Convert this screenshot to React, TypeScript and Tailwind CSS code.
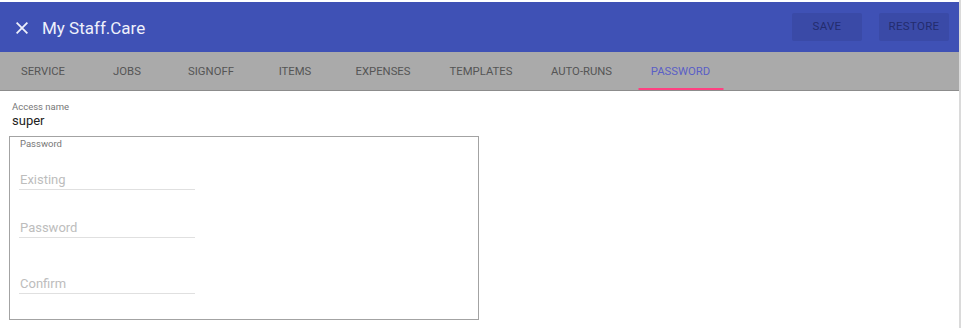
import { useState } from "react";

const tabs: { label: string; width: string }[] = [
  { label: "SERVICE", width: "w-[84px]" },
  { label: "JOBS", width: "w-[84px]" },
  { label: "SIGNOFF", width: "w-[84px]" },
  { label: "ITEMS", width: "w-[84px]" },
  { label: "EXPENSES", width: "w-[92px]" },
  { label: "TEMPLATES", width: "w-[104px]" },
  { label: "AUTO-RUNS", width: "w-[97px]" },
  { label: "PASSWORD", width: "w-[101px]" },
];

function CloseIcon() {
  return (
    <svg width="12" height="12" viewBox="0 0 12 12" fill="none" stroke="currentColor" strokeWidth="1.8">
      <path d="M0.6 0.6 L11.4 11.4 M11.4 0.6 L0.6 11.4" />
    </svg>
  );
}

function UnderlineInput({ placeholder, className }: { placeholder: string; className: string }) {
  return (
    <input
      type="password"
      placeholder={placeholder}
      className={`block w-[176px] h-[20px] border-b border-[#e0e0e0] bg-transparent px-[1px] text-[13px] text-[#333] outline-none placeholder:text-[#bdbdbd] ${className}`}
    />
  );
}

export default function App() {
  const [active, setActive] = useState("PASSWORD");

  return (
    <div className="w-[961px] h-[328px] overflow-hidden bg-white pt-[2px] border-r-2 border-[#dadada] font-['Roboto',sans-serif]">
      {/* barre du haut */}
      <header className="h-[50px] bg-[#3f51b5] flex items-center pl-[16px] pr-[10px]">
        <span className="text-[#eef0fb] flex mt-[1px]">
          <CloseIcon />
        </span>
        <h1 className="ml-[14px] mt-[2px] text-[17px] font-normal text-[#eef0fb] leading-none">My Staff.Care</h1>
        <div className="ml-auto flex gap-[17px]">
          <button className="w-[70px] h-[28px] rounded-[2px] bg-[#3a4aa7] text-[11.5px] text-[#232c6e] tracking-[0.3px]">
            SAVE
          </button>
          <button className="w-[70px] h-[28px] rounded-[2px] bg-[#3a4aa7] text-[11.5px] text-[#232c6e] tracking-[0.3px]">
            RESTORE
          </button>
        </div>
      </header>

      {/* onglets */}
      <nav className="h-[39px] bg-[#aaaaaa] border-b border-[#8c8c8c] flex pl-[1px]">
        {tabs.map((t) => (
          <button
            key={t.label}
            onClick={() => setActive(t.label)}
            className={`relative ${t.width} h-full flex items-center justify-center text-[11.3px] pt-[3px] ${
              active === t.label ? "text-[#5a5fc6]" : "text-[#555555]"
            }`}
          >
            {t.label}
            {active === t.label && (
              <span className="absolute bottom-0 left-1/2 -translate-x-1/2 w-[85px] h-[2px] bg-[#ff4081]" />
            )}
          </button>
        ))}
      </nav>

      {/* contenu */}
      <div className="px-[9px]">
        <div className="pt-[10px] pl-[3px]">
          <div className="text-[9.5px] leading-[12px] text-[#777]">Access name</div>
          <div className="text-[13px] leading-[16px] text-[#222]">super</div>
        </div>

        <div className="mt-[7px] w-[470px] h-[184px] border border-[#a3a3a3] px-[9px] pt-[1px]">
          <div className="pl-[1px] text-[9.5px] leading-[12px] text-[#777]">Password</div>
          <UnderlineInput placeholder="Existing" className="mt-[20px]" />
          <UnderlineInput placeholder="Password" className="mt-[28px]" />
          <UnderlineInput placeholder="Confirm" className="mt-[36px]" />
        </div>
      </div>
    </div>
  );
}
